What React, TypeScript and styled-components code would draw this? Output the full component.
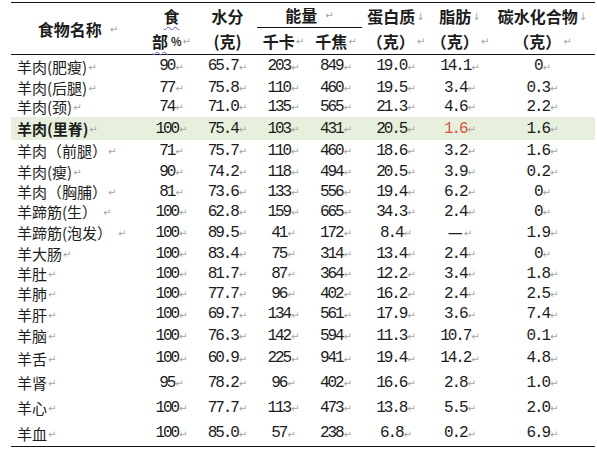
import React from 'react';
import styled, { createGlobalStyle } from 'styled-components';

const GlobalStyle = createGlobalStyle`
  html, body { margin: 0; padding: 0; background: #ffffff; }
  body { width: 597px; height: 458px; overflow: hidden; }
`;

const COLS = '134px 53px 59px 53px 52px 68px 60px 105px';

const Page = styled.div`
  padding: 2px 0 0 11px;
  width: 584px;
  font-family: "Noto Sans CJK SC", "Noto Sans", sans-serif;
  color: #1c1c1c;
`;

const Table = styled.div`
  border-top: 1.5px solid #141414;
  border-bottom: 1.5px solid #141414;
`;

const Head = styled.div`
  display: grid;
  grid-template-columns: ${COLS};
  grid-template-rows: 25px 26px;
  border-bottom: 1.5px solid #141414;
`;

const HeadCell = styled.div<{ $col: string; $row: string; $rule?: boolean }>`
  grid-column: ${(p) => p.$col};
  grid-row: ${(p) => p.$row};
  display: flex;
  flex-direction: column;
  align-items: center;
  justify-content: center;
  font-size: 16px;
  font-weight: 700;
  line-height: 1;
  ${(p) => (p.$rule ? 'border-bottom: 1px solid #141414;' : '')}
`;

const HeadLine = styled.div<{ $h: number }>`
  height: ${(p) => p.$h}px;
  display: flex;
  align-items: center;
  justify-content: center;
  white-space: nowrap;
`;

const Squiggle = styled.span`
  text-decoration: underline wavy #5b5bd6;
  text-underline-offset: 3px;
  text-decoration-thickness: 1px;
`;

const Pct = styled.span`
  font-size: 11px;
  margin-left: 3px;
`;

const Mark = styled.span<{ $gap?: number }>`
  font-family: "DejaVu Sans", sans-serif;
  font-size: 10px;
  font-weight: 400;
  color: #a4a4a4;
  margin-left: ${(p) => p.$gap ?? 1}px;
  letter-spacing: 0;
  position: relative;
  top: 1px;
`;

const Row = styled.div<{ $h: number; $hl?: boolean }>`
  display: grid;
  grid-template-columns: ${COLS};
  height: ${(p) => p.$h}px;
  background: ${(p) => (p.$hl ? '#e7f0dd' : 'transparent')};
`;

const NameCell = styled.div<{ $bold?: boolean }>`
  display: flex;
  align-items: center;
  padding-left: 6px;
  font-size: 15px;
  font-weight: ${(p) => (p.$bold ? 700 : 400)};
  white-space: nowrap;
`;

const NumCell = styled.div<{ $red?: boolean }>`
  display: flex;
  align-items: center;
  justify-content: center;
  font-family: "Liberation Mono", "DejaVu Sans Mono", monospace;
  font-size: 16px;
  letter-spacing: -2.1px;
  color: ${(p) => (p.$red ? '#d8553f' : '#1c1c1c')};
  white-space: nowrap;
`;

const Dash = styled.span`
  font-family: "DejaVu Sans", sans-serif;
  font-size: 15px;
  letter-spacing: 0;
`;

type R = {
  name: string;
  vals: string[];
  h: number;
  bold?: boolean;
  hl?: boolean;
  red?: number;
  gap?: number;
};

const rows: R[] = [
  { name: '羊肉(肥瘦)', vals: ['90', '65.7', '203', '849', '19.0', '14.1', '0'], h: 22 },
  { name: '羊肉(后腿)', vals: ['77', '75.8', '110', '460', '19.5', '3.4', '0.3'], h: 19 },
  { name: '羊肉(颈)', vals: ['74', '71.0', '135', '565', '21.3', '4.6', '2.2'], h: 21 },
  { name: '羊肉(里脊)', vals: ['100', '75.4', '103', '431', '20.5', '1.6', '1.6'], h: 23, bold: true, hl: true, red: 5 },
  { name: '羊肉（前腿）', vals: ['71', '75.7', '110', '460', '18.6', '3.2', '1.6'], h: 21 },
  { name: '羊肉(瘦)', vals: ['90', '74.2', '118', '494', '20.5', '3.9', '0.2'], h: 20 },
  { name: '羊肉（胸脯）', vals: ['81', '73.6', '133', '556', '19.4', '6.2', '0'], h: 20 },
  { name: '羊蹄筋(生）', vals: ['100', '62.8', '159', '665', '34.3', '2.4', '0'], h: 21, gap: 6 },
  { name: '羊蹄筋(泡发）', vals: ['100', '89.5', '41', '172', '8.4', '—', '1.9'], h: 21, gap: 6 },
  { name: '羊大肠', vals: ['100', '83.4', '75', '314', '13.4', '2.4', '0'], h: 20 },
  { name: '羊肚', vals: ['100', '81.7', '87', '364', '12.2', '3.4', '1.8'], h: 20 },
  { name: '羊肺', vals: ['100', '77.7', '96', '402', '16.2', '2.4', '2.5'], h: 20 },
  { name: '羊肝', vals: ['100', '69.7', '134', '561', '17.9', '3.6', '7.4'], h: 22 },
  { name: '羊脑', vals: ['100', '76.3', '142', '594', '11.3', '10.7', '0.1'], h: 21 },
  { name: '羊舌', vals: ['100', '60.9', '225', '941', '19.4', '14.2', '4.8'], h: 24 },
  { name: '羊肾', vals: ['95', '78.2', '96', '402', '16.6', '2.8', '1.0'], h: 25 },
  { name: '羊心', vals: ['100', '77.7', '113', '473', '13.8', '5.5', '2.0'], h: 25 },
  { name: '羊血', vals: ['100', '85.0', '57', '238', '6.8', '0.2', '6.9'], h: 26 },
];

const Ret = () => <Mark>↵</Mark>;
const Brk = () => <Mark>↓</Mark>;

export default function App() {
  return (
    <>
      <GlobalStyle />
      <Page>
        <Table>
          <Head>
            <HeadCell $col="1" $row="1 / 3">
              <HeadLine $h={51}>
                食物名称<Mark $gap={8}>↵</Mark>
              </HeadLine>
            </HeadCell>
            <HeadCell $col="2" $row="1 / 3">
              <HeadLine $h={25}>
                <Squiggle>食</Squiggle>
              </HeadLine>
              <HeadLine $h={26}>
                <Squiggle>部</Squiggle>
                <Pct>%</Pct>
                <Ret />
              </HeadLine>
            </HeadCell>
            <HeadCell $col="3" $row="1 / 3">
              <HeadLine $h={25}>水分</HeadLine>
              <HeadLine $h={26}>(克)</HeadLine>
            </HeadCell>
            <HeadCell $col="4 / 6" $row="1" $rule>
              <HeadLine $h={24}>
                能量<Mark $gap={8}>↵</Mark>
              </HeadLine>
            </HeadCell>
            <HeadCell $col="4" $row="2">
              <HeadLine $h={26}>
                千卡
                <Ret />
              </HeadLine>
            </HeadCell>
            <HeadCell $col="5" $row="2">
              <HeadLine $h={26}>
                千焦
                <Ret />
              </HeadLine>
            </HeadCell>
            <HeadCell $col="6" $row="1 / 3">
              <HeadLine $h={25}>
                蛋白质
                <Brk />
              </HeadLine>
              <HeadLine $h={26}>
                （克）<Mark $gap={2}>↵</Mark>
              </HeadLine>
            </HeadCell>
            <HeadCell $col="7" $row="1 / 3">
              <HeadLine $h={25}>
                脂肪
                <Brk />
              </HeadLine>
              <HeadLine $h={26}>
                （克）<Mark $gap={2}>↵</Mark>
              </HeadLine>
            </HeadCell>
            <HeadCell $col="8" $row="1 / 3">
              <HeadLine $h={25}>
                碳水化合物
                <Brk />
              </HeadLine>
              <HeadLine $h={26}>
                （克）<Mark $gap={2}>↵</Mark>
              </HeadLine>
            </HeadCell>
          </Head>
          {rows.map((r) => (
            <Row key={r.name} $h={r.h} $hl={r.hl}>
              <NameCell $bold={r.bold}>
                {r.name}
                <Mark $gap={r.gap}>↵</Mark>
              </NameCell>
              {r.vals.map((v, i) => (
                <NumCell key={i} $red={r.red === i}>
                  {v === '—' ? <Dash>—</Dash> : v}
                  <Ret />
                </NumCell>
              ))}
            </Row>
          ))}
        </Table>
      </Page>
    </>
  );
}
